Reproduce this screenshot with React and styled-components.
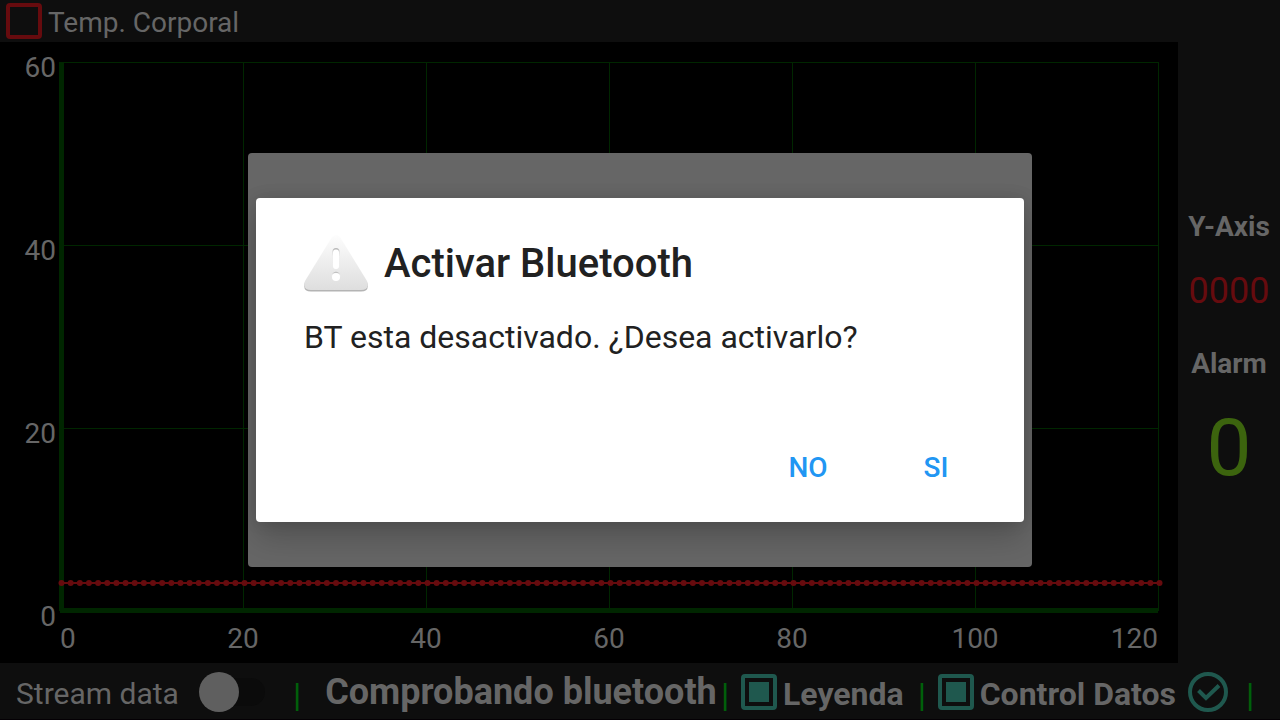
import React from 'react';
import styled, { createGlobalStyle } from 'styled-components';

const GlobalStyle = createGlobalStyle`
  *, *::before, *::after { box-sizing: border-box; }
  body {
    margin: 0;
    background: #000;
    color: #666;
    font-family: Roboto, "Liberation Sans", sans-serif;
    font-size: 28px;
  }
`;

const RED = '#660b0e';
const TEAL = '#1f584e';
const AXIS = '#002600';

const Screen = styled.div`
  display: flex;
  flex-direction: column;
  min-height: 100vh;
`;

const Legend = styled.header`
  display: flex;
  align-items: center;
  height: 42px;
  padding: 0 6px;
  background: #0e0e0e;
`;

const CheckLabel = styled.label`
  display: flex;
  align-items: center;
  gap: 6px;
  font-size: ${(p) => (p.$bold ? 32 : 28)}px;
  font-weight: ${(p) => (p.$bold ? 700 : 400)};
  line-height: 36px;
  white-space: nowrap;
`;

const LabelText = styled.span`
  padding-top: 4px;
`;

const Check = styled.input`
  appearance: none;
  display: grid;
  place-items: center;
  flex: none;
  width: 36px;
  height: 36px;
  margin: 0;
  border: 4px solid ${(p) => p.$color};
  border-radius: 4px;

  &:checked::before {
    content: "";
    width: 20px;
    height: 20px;
    background: ${(p) => p.$color};
  }
`;

const Main = styled.main`
  display: flex;
  flex: 1;
`;

const ChartPanel = styled.section`
  display: flex;
  flex: 1;
  min-width: 0;
  padding: 20px 20px 52px 60px;
`;

const Plot = styled.svg`
  flex: 1;
  width: 100%;
  min-width: 0;
  overflow: visible;

  text {
    fill: #666;
    font-size: 28px;
  }
`;

const SidePanel = styled.aside`
  display: flex;
  flex-direction: column;
  align-items: center;
  flex: none;
  width: 102px;
  padding-top: 169px;
  background: #0e0e0e;
`;

const SideLabel = styled.div`
  font-size: 28px;
  font-weight: 700;
  line-height: 32px;
`;

const AxisValue = styled.output`
  margin: 24px 0 33px;
  color: ${RED};
  font-size: 36px;
  line-height: 48px;
`;

const AlarmValue = styled.output`
  margin-top: 20px;
  color: #3c640e;
  font-size: 80px;
  line-height: 96px;
`;

const Toolbar = styled.footer`
  display: flex;
  align-items: center;
  height: 57px;
  padding: 2px 26px 0 16px;
  border-bottom: 1px solid #040004;
  background: #0e0e0e;
`;

const SwitchLabel = styled.label`
  display: flex;
  align-items: center;
  gap: 20px;
  font-size: 30px;
  line-height: 36px;
  white-space: nowrap;
`;

const Switch = styled.input`
  appearance: none;
  display: flex;
  align-items: center;
  width: 66px;
  height: 28px;
  margin: 0;
  border-radius: 14px;
  background: #0b0b0b;

  &::before {
    content: "";
    width: 40px;
    height: 40px;
    border-radius: 50%;
    background: #5f5f5f;
  }

  &:checked::before { margin-left: auto; }
`;

const Divider = styled.span`
  flex: none;
  width: 8px;
  margin: ${(p) => p.$margin || '0'};
  padding-top: 6px;
  color: #00600a;
  font-size: 34px;
  line-height: 36px;
  text-align: center;
`;

const Status = styled.div`
  flex: 1;
  padding-left: 20px;
  font-size: 36px;
  font-weight: 700;
  line-height: 40px;
  text-align: center;
  white-space: nowrap;
`;

const IconButton = styled.button`
  display: flex;
  margin: 0 18px 0 12px;
  padding: 0;
  border: 0;
  background: none;
`;

const Scrim = styled.div`
  position: fixed;
  inset: 0;
  display: grid;
  place-items: center;
`;

const BackSheet = styled.div`
  width: calc(60% + 16px);
  padding: 45px 8px;
  border-radius: 4px;
  overflow: hidden;
  background: #666;
`;

const Dialog = styled.div`
  padding: 36px 24px 6px 48px;
  border-radius: 4px;
  background: #fff;
  box-shadow: 0 16px 32px rgba(0, 0, 0, 0.2), 0 0 16px rgba(0, 0, 0, 0.12);
  color: #212121;
`;

const DialogHead = styled.div`
  display: flex;
  align-items: center;
  gap: 16px;
  height: 60px;
`;

const DialogTitle = styled.h2`
  margin: 0;
  font-size: 40px;
  font-weight: 500;
  line-height: 48px;
`;

const Message = styled.p`
  margin: 24px 0 64px;
  font-size: 32px;
  line-height: 38px;
`;

const Actions = styled.div`
  display: flex;
  justify-content: flex-end;
`;

const ActionButton = styled.button`
  min-width: 128px;
  height: 96px;
  padding: 0;
  border: 0;
  background: none;
  color: #2196f3;
  font: 500 28px/32px Roboto, "Liberation Sans", sans-serif;
`;

const pct = (v, max) => `${(v / max) * 100}%`;

function Chart() {
  const xs = [0, 20, 40, 60, 80, 100, 120];
  const ys = [0, 20, 40, 60];
  const samples = Array.from({ length: 121 }, (_, i) => i);
  const anchor = (v) => (v === 0 ? 'start' : v === 120 ? 'end' : 'middle');
  return (
    <Plot role="img" aria-label="Temp. Corporal">
      <g stroke={AXIS} strokeWidth="1" shapeRendering="crispEdges">
        {xs.slice(1).map((v) => (
          <line key={v} x1={pct(v, 120)} x2={pct(v, 120)} y1="0" y2="100%" />
        ))}
        {ys.slice(1).map((v) => (
          <line key={v} x1="0" x2="100%" y1={pct(60 - v, 60)} y2={pct(60 - v, 60)} />
        ))}
      </g>
      <g stroke={AXIS} strokeWidth="5">
        <line x1="0" x2="0" y1="0" y2="100%" transform="translate(1.5 0)" />
        <line x1="0" x2="100%" y1="100%" y2="100%" transform="translate(0 -.5)" />
      </g>
      <g fill={RED} stroke={RED} transform="translate(1.5 -.5)">
        <line x1="0" x2="100%" y1="95%" y2="95%" strokeWidth="2" />
        {samples.map((i) => (
          <circle key={i} cx={pct(i, 120)} cy="95%" r="3" stroke="none" />
        ))}
      </g>
      {xs.map((v) => (
        <text key={v} x={pct(v, 120)} y="100%" dy="37" textAnchor={anchor(v)}>{v}</text>
      ))}
      {ys.map((v) => (
        <text key={v} x="-4" y={pct(60 - v, 60)} dy="15" textAnchor="end">{v}</text>
      ))}
    </Plot>
  );
}

function WarningIcon() {
  return (
    <svg width="64" height="60" viewBox="0 0 64 60" aria-hidden="true">
      <defs>
        <linearGradient id="face" x1="0" y1="0" x2="0" y2="1">
          <stop offset="0" stopColor="#fdfdfd" />
          <stop offset="1" stopColor="#dedede" />
        </linearGradient>
        <linearGradient id="rim" x1="0" y1="0" x2="0" y2="1">
          <stop offset="0" stopColor="#b4b4b4" />
          <stop offset="0.4" stopColor="#eee" />
        </linearGradient>
      </defs>
      <path d="M1 48L63 48Q66 57.500 57 57.500H7Q-2 57.500 1 48Z" fill="#b4b4b4" />
      <path d="M28 3Q32 -1 36 3L63 47Q66 56 57 56H7Q-2 56 1 47Z" fill="url(#face)" />
      <rect x="28.500" y="14" width="7" height="21" rx="3.500" fill="url(#rim)" />
      <rect x="29" y="15.500" width="6" height="19.500" rx="3" fill="#fff" />
      <circle cx="32" cy="42" r="4.300" fill="url(#rim)" />
      <circle cx="32" cy="43" r="4" fill="#fff" />
    </svg>
  );
}

export default function App() {
  return (
    <>
      <GlobalStyle />
      <Screen>
        <Legend>
          <CheckLabel>
            <Check type="checkbox" $color={RED} />
            <LabelText>Temp. Corporal</LabelText>
          </CheckLabel>
        </Legend>
        <Main>
          <ChartPanel>
            <Chart />
          </ChartPanel>
          <SidePanel>
            <SideLabel>Y-Axis</SideLabel>
            <AxisValue>0000</AxisValue>
            <SideLabel>Alarm</SideLabel>
            <AlarmValue>0</AlarmValue>
          </SidePanel>
        </Main>
        <Toolbar>
          <SwitchLabel>
            <LabelText>Stream data</LabelText>
            <Switch type="checkbox" role="switch" />
          </SwitchLabel>
          <Divider $margin="0 0 0 28px">|</Divider>
          <Status>Comprobando bluetooth</Status>
          <Divider $margin="0 12px 0 0">|</Divider>
          <CheckLabel $bold>
            <Check type="checkbox" defaultChecked $color={TEAL} />
            <LabelText>Leyenda</LabelText>
          </CheckLabel>
          <Divider $margin="0 12px 0 14px">|</Divider>
          <CheckLabel $bold>
            <Check type="checkbox" defaultChecked $color={TEAL} />
            <LabelText>Control Datos</LabelText>
          </CheckLabel>
          <IconButton type="button" aria-label="OK">
            <svg width="40" height="40" viewBox="0 0 40 40" fill="none" stroke={TEAL} strokeWidth="4">
              <circle cx="20" cy="20" r="18" />
              <path d="M10.500 18.500L18 26L31 13.500" />
            </svg>
          </IconButton>
          <Divider>|</Divider>
        </Toolbar>
      </Screen>
      <Scrim>
        <BackSheet>
          <Dialog role="alertdialog" aria-modal="true" aria-labelledby="dialog-title" aria-describedby="dialog-message">
            <DialogHead>
              <WarningIcon />
              <DialogTitle id="dialog-title">Activar Bluetooth</DialogTitle>
            </DialogHead>
            <Message id="dialog-message">BT esta desactivado. ¿Desea activarlo?</Message>
            <Actions>
              <ActionButton type="button">NO</ActionButton>
              <ActionButton type="button">SI</ActionButton>
            </Actions>
          </Dialog>
        </BackSheet>
      </Scrim>
    </>
  );
}
